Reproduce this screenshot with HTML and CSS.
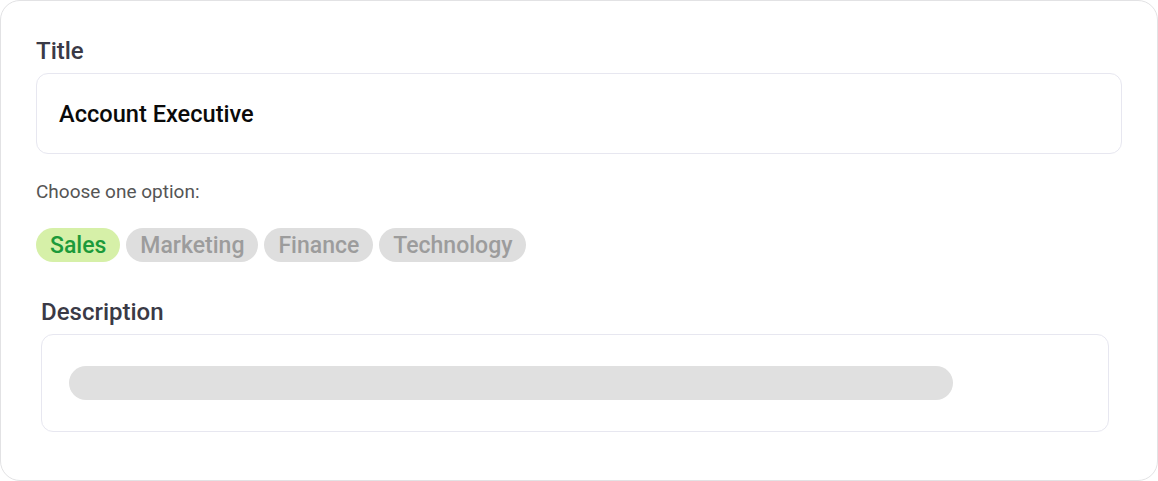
FILE: index.html
```html
<!DOCTYPE html>
<html>
<head>
<meta charset="utf-8">
<link rel="stylesheet" href="styles.css">
</head>
<body>
<div class="card">
  <div class="field-label">Title</div>
  <div class="input">Account Executive</div>
  <div class="hint">Choose one option:</div>
  <div class="chips">
    <span class="chip chip-active">Sales</span>
    <span class="chip">Marketing</span>
    <span class="chip">Finance</span>
    <span class="chip">Technology</span>
  </div>
  <div class="desc">
    <div class="field-label">Description</div>
    <div class="desc-box">
      <div class="skeleton"></div>
    </div>
  </div>
</div>
</body>
</html>
```

FILE: styles.css
```css
* { box-sizing: border-box; }
html, body { margin: 0; padding: 0; background: #fff; }
body { font-family: Roboto, "Liberation Sans", sans-serif; }

.card {
  width: 1158px;
  height: 481px;
  border: 1px solid #e2e2e4;
  border-radius: 20px;
  padding: 36px 35px 0 35px;
}

.field-label {
  font-size: 24px;
  line-height: 28px;
  font-weight: 500;
  color: #3a3a46;
}

.input {
  margin-top: 8px;
  height: 81px;
  border: 1px solid #e7e7f0;
  border-radius: 12px;
  padding: 1px 22px 0;
  display: flex;
  align-items: center;
  font-size: 23.6px;
  font-weight: 500;
  color: #0a0a0a;
}

.hint {
  margin-top: 27px;
  font-size: 19px;
  line-height: 22px;
  color: #555;
}

.chips {
  margin-top: 25px;
  display: flex;
  gap: 6px;
}

.chip {
  height: 34px;
  border-radius: 17px;
  padding: 1px 14px 0;
  display: flex;
  align-items: center;
  font-size: 23px;
  font-weight: 500;
  background: #dedede;
  color: #9c9c9c;
}

.chip-active {
  background: #d6f0a8;
  color: #1c9a3a;
}

.desc {
  margin-top: 36px;
  margin-left: 5px;
  width: 1068px;
}

.desc-box {
  margin-top: 8px;
  height: 98px;
  border: 1px solid #e7e7f0;
  border-radius: 12px;
  padding: 31px 27px;
}

.skeleton {
  width: 884px;
  height: 34px;
  border-radius: 17px;
  background: #e0e0e0;
}
```
